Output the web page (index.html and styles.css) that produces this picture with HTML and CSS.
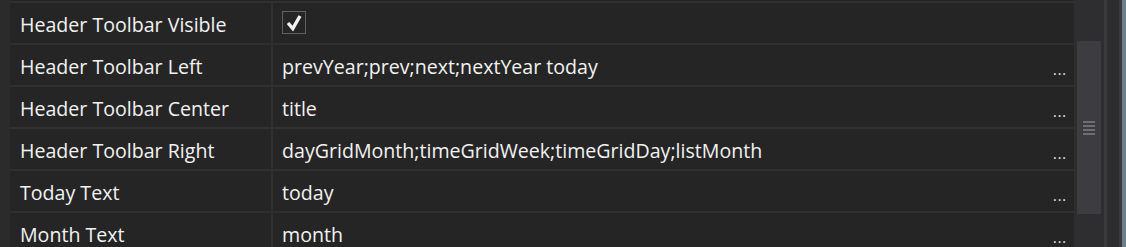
FILE: index.html
```html
<!DOCTYPE html>
<html>
<head>
  <meta charset="UTF-8">
  <title>Property Grid</title>
  <link rel="stylesheet" href="styles.css">
</head>
<body>
  <div class="panel">
    <div class="gutter"></div>
    <div class="grid">
      <div class="row">
        <div class="name">Header Toolbar Visible</div>
        <div class="value"><span class="check">
          <svg width="22" height="21" viewBox="0 0 22 21"><path d="M5 11 L9.8 16.5 L17 4" fill="none" stroke="#f2f2f2" stroke-width="3.4" stroke-linecap="butt" stroke-linejoin="miter"/></svg>
        </span></div>
      </div>
      <div class="row">
        <div class="name">Header Toolbar Left</div>
        <div class="value"><span class="text">prevYear;prev;next;nextYear today</span><span class="more">...</span></div>
      </div>
      <div class="row">
        <div class="name">Header Toolbar Center</div>
        <div class="value"><span class="text">title</span><span class="more">...</span></div>
      </div>
      <div class="row">
        <div class="name">Header Toolbar Right</div>
        <div class="value"><span class="text">dayGridMonth;timeGridWeek;timeGridDay;listMonth</span><span class="more">...</span></div>
      </div>
      <div class="row">
        <div class="name">Today Text</div>
        <div class="value"><span class="text">today</span><span class="more">...</span></div>
      </div>
      <div class="row">
        <div class="name">Month Text</div>
        <div class="value"><span class="text">month</span><span class="more">...</span></div>
      </div>
    </div>
    <div class="scrollbar">
      <div class="thumb">
        <div class="grip"><i></i><i></i><i></i><i></i></div>
      </div>
    </div>
    <div class="edge-a"></div>
    <div class="edge-b"></div>
    <div class="edge-c"></div>
    <div class="edge-d"></div>
  </div>
</body>
</html>
```

FILE: styles.css
```css
body {
  margin: 0;
  background: #252525;
  font-family: 'Open Sans', 'Noto Sans', sans-serif;
  color: #f2f2f2;
  overflow: hidden;
}

.panel {
  display: flex;
  height: 247px;
}

.gutter {
  width: 10px;
  background: #2b2b2b;
  flex: none;
}

.grid {
  width: 1064px;
  flex: none;
  display: flex;
  flex-direction: column;
  gap: 2px;
  background: #303030;
  border-top: 1px solid #252525;
  box-sizing: border-box;
  height: 247px;
  overflow: hidden;
  padding-top: 2px;
}

.row {
  display: grid;
  grid-template-columns: 261px 1fr;
  column-gap: 2px;
  height: 40px;
  flex: none;
}

.name, .value {
  background: #252525;
  display: flex;
  align-items: center;
  padding-top: 2px;
  box-sizing: border-box;
  font-size: 19.6px;
  white-space: nowrap;
}

.name {
  padding-left: 10px;
}

.value {
  padding-left: 9px;
  padding-right: 7px;
}

.text {
  flex: 1;
}

.more {
  font-size: 14px;
  align-self: flex-end;
  padding-bottom: 6px;
  letter-spacing: 1px;
}

.check {
  width: 22px;
  height: 21px;
  border: 1px solid #606060;
  display: flex;
  margin-top: -3px;
}

.scrollbar {
  width: 30px;
  flex: none;
  background: #2e2e30;
  padding: 41px 3px 0 3px;
  box-sizing: border-box;
}

.thumb {
  height: 173px;
  background: #3d3d41;
  display: flex;
  align-items: center;
  justify-content: center;
}

.grip {
  display: flex;
  flex-direction: column;
  gap: 2px;
  width: 12px;
}

.grip i {
  display: block;
  height: 2px;
  background: #6f6f72;
}

.edge-a { width: 3px; background: #3a3a3a; flex: none; }
.edge-b { width: 12px; background: #2d2d2f; flex: none; }
.edge-c { width: 3px; background: #3a3a3c; flex: none; }
.edge-d { flex: 1; background: #6b808b; }
```
